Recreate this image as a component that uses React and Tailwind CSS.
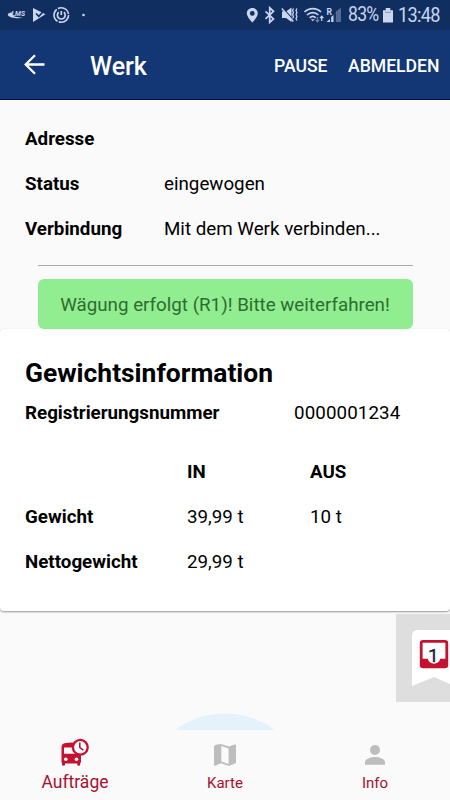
import React from "react";

function StatusBar() {
  return (
    <div className="flex h-[30px] shrink-0 items-center bg-[#102e60] text-[#c9d6ee]">
      <svg className="h-[30px] w-[100px] shrink-0" viewBox="0 0 100 30" fill="none">
        <path d="M13 12.300C9.500 12.500 7 14 8 15.200c1.500 2.400 9 4 17 2.400-5 .2-11-.8-12.500-2.400-.8-.7-.2-1.700 1-2.900z" fill="#c9d6ee" />
        <text x="11.500" y="15.800" fontSize="7" fontWeight="700" fontStyle="italic" textLength="13.500" lengthAdjust="spacingAndGlyphs" fill="#c9d6ee" fontFamily="Roboto, sans-serif">LMS</text>
        <path d="M33 8l12.500 6.300L33 22z" fill="#c9d6ee" />
        <path d="M36 13.500l2.800 2.800 5.700-6" stroke="#102e60" strokeWidth="1.600" />
        <circle cx="61.300" cy="15" r="7.300" stroke="#c9d6ee" strokeWidth="1.600" strokeDasharray="14 1.300" />
        <path d="M58.700 12.200a3.900 3.900 0 1 0 5.200 0M61.300 11v4" stroke="#c9d6ee" strokeWidth="1.700" />
        <circle cx="83.500" cy="15" r="1.300" fill="#c9d6ee" />
      </svg>
      <svg className="ml-[145px] h-[30px] w-[100px] shrink-0" viewBox="245 0 100 30" fill="none">
        <path fillRule="evenodd" d="M252.300 8c-3.200 0-5.500 2.400-5.500 5.300 0 3.900 5.500 9.200 5.500 9.200s5.500-5.300 5.500-9.200c0-2.900-2.300-5.300-5.500-5.300zm0 3a2.400 2.400 0 1 1 0 4.800 2.400 2.400 0 0 1 0-4.800z" fill="#c9d6ee" />
        <path d="M265.500 11.300l8 7.600-3.800 3.500V7.800l3.800 3.500-8 7.600" stroke="#c9d6ee" strokeWidth="1.700" />
        <path d="M282 11.500h4l5.500-4v14.500L286 18h-4z" fill="#c9d6ee" />
        <path d="M282.800 8l11 12.500" stroke="#102e60" strokeWidth="1.200" />
        <path d="M281.800 8.500l11.500 13" stroke="#c9d6ee" strokeWidth="1.500" />
        <path d="M293.500 8.500l-1 2 1 2-1 2 1 2-1 2M297 8.500l-1 2 1 2-1 2 1 2-1 2 1 2" stroke="#c9d6ee" strokeWidth="1.300" />
        <path d="M304.500 12c4.600-4.600 12-4.600 16.500 0M307 15c3.300-3.100 8.200-3.100 11.400 0M309.700 17.800c1.800-1.700 4.300-1.700 6 0" stroke="#c9d6ee" strokeWidth="1.700" />
        <path d="M310.800 19.200h4l-2 2.100z" fill="#c9d6ee" />
        <path d="M317.500 17v4.500M315.800 19.800l1.700 2 1.700-2" stroke="#6c82aa" strokeWidth="1.200" />
        <path d="M321.700 21v-4.500M320 18.200l1.700-2 1.700 2" stroke="#c9d6ee" strokeWidth="1.200" />
        <text x="326.500" y="14.600" fontSize="8.500" fontWeight="700" fill="#c9d6ee" fontFamily="Roboto, sans-serif">R</text>
        <path d="M326.500 22l3.500-3V22zM331.200 17l2.300-2V22h-2.300z" fill="#c9d6ee" />
        <path d="M335.800 11.500l5.200-3.800V22h-5.200z" fill="#536b99" />
      </svg>
      <span className="ml-[3px] w-[35px] shrink-0">
        <span className="inline-block origin-left scale-x-[0.88] whitespace-nowrap text-[20px] leading-none tracking-[-0.8px]">83%</span>
      </span>
      <svg className="h-[30px] w-[10px] shrink-0" viewBox="383 0 10 30">
        <path d="M383 10.200h2.700V8h4.600v2.200h2.700V22.500h-10z" fill="#c9d6ee" />
        <path d="M385 12.300h6" stroke="#8496b9" />
      </svg>
      <span className="ml-[5px] inline-block origin-left scale-x-[0.91] whitespace-nowrap text-[20px] leading-none tracking-[-0.8px]">13:48</span>
    </div>
  );
}

function Row({ label, value }) {
  return (
    <div className="grid h-[45px] grid-cols-[139px_1fr] items-center">
      <span className="font-bold">{label}</span>
      <span>{value}</span>
    </div>
  );
}

function WeightRow({ label, a, b, head }) {
  return (
    <div className={head ? "grid h-[45px] grid-cols-[162px_123px_1fr] items-center font-bold" : "grid h-[45px] grid-cols-[162px_123px_1fr] items-center"}>
      <span className="font-bold">{label}</span>
      <span>{a}</span>
      <span>{b}</span>
    </div>
  );
}

export default function App() {
  return (
    <div className="relative flex h-[800px] w-[450px] flex-col overflow-hidden bg-[#fafafa] font-['Roboto',sans-serif] text-[18.75px] leading-[22px] text-black">
      <StatusBar />
      <header className="flex h-[70px] shrink-0 items-center border-b border-[#02104c] bg-[#133774] text-white">
        <svg className="ml-[24px] h-[22px] w-[22px] shrink-0" viewBox="0 0 22 22" fill="none" stroke="white" strokeWidth="2.300">
          <path d="M20.500 10.500H2M11 1.200L1.700 10.500 11 19.800" />
        </svg>
        <h1 className="ml-[44px] w-[184px] shrink-0 pt-[4px] text-[25px] font-medium leading-none">Werk</h1>
        <span className="w-[74px] shrink-0 pt-[2px] text-[17.6px] font-medium">PAUSE</span>
        <span className="pt-[2px] text-[17.6px] font-medium">ABMELDEN</span>
      </header>

      <section className="h-[165px] shrink-0 pl-[25px] pt-[16px]">
        <Row label="Adresse" value="" />
        <Row label="Status" value="eingewogen" />
        <Row label="Verbindung" value="Mit dem Werk verbinden..." />
      </section>
      <div className="mx-[37.5px] h-px shrink-0 bg-[#aaaaaa]" />
      <div className="mx-[37.5px] mt-[13px] flex h-[50px] shrink-0 items-center justify-center rounded-[6px] bg-[#90ee90] pt-[2px] text-[#2f6b2f]">
        Wägung erfolgt (R1)! Bitte weiterfahren!
      </div>

      <section className="h-[282px] shrink-0 rounded-[4px] bg-white pl-[25px] pt-[29px] shadow-[0_1px_2px_rgba(0,0,0,0.4)]">
        <h2 className="h-[32px] text-[26.4px] font-bold leading-[30px]">Gewichtsinformation</h2>
        <div className="grid h-[45px] grid-cols-[269px_1fr] items-center">
          <span className="font-bold">Registrierungsnummer</span>
          <span className="tracking-[0.1px]">0000001234</span>
        </div>
        <div className="mt-[14px]">
          <WeightRow label="" a="IN" b="AUS" head />
          <WeightRow label="Gewicht" a="39,99 t" b="10 t" />
          <WeightRow label="Nettogewicht" a="29,99 t" b="" />
        </div>
      </section>

      <div className="mt-[3px] flex h-[88px] w-[54px] shrink-0 self-end bg-[#dedede]">
        <svg className="h-[88px] w-[54px]" viewBox="396 614 54 88">
          <path d="M412 636q0-6 6-6h32v54l-16-7-22 9z" fill="white" />
          <rect x="421.200" y="641.300" width="25.600" height="25.600" rx="1.800" fill="white" stroke="#c41230" strokeWidth="2.800" />
          <path d="M421 658.800h6.800c1.300 6.500 11 6.500 12.400 0h6.800v8.200H421z" fill="#c41230" />
          <text x="433.300" y="662" textAnchor="middle" fontSize="19" fill="#102040" stroke="#102040" strokeWidth="0.300" fontFamily="Roboto, sans-serif">1</text>
        </svg>
      </div>
      <svg className="mt-[11px] h-[17px] w-[100px] shrink-0 self-center" viewBox="0 0 100 17">
        <circle cx="50" cy="84.500" r="84" fill="#e3f2fb" />
      </svg>

      <nav className="grid h-[70px] shrink-0 grid-cols-3 text-[#a90f30]">
        <div className="flex flex-col items-center">
          <svg className="mt-[7px] h-[30px] w-[30px]" viewBox="60 737 30 30">
            <path fill="#c41230" d="M61.500 747q0-3.500 4-4 6-.8 11.500 0 4 .5 4 4v14.500q0 1.200-.8 1.700v1.300q0 1.200-1.500 1.200t-1.500-1.200V763.500H65v1q0 1.200-1.500 1.200T62 764.500v-1.300q-.5-.5-.5-1.700z" />
            <path fill="#fafafa" d="M64 747.500h9q.4 3.700 3.500 6.200H64z" />
            <circle cx="65.800" cy="759.300" r="1.800" fill="#fafafa" />
            <circle cx="76.500" cy="759.300" r="1.800" fill="#fafafa" />
            <circle cx="80.300" cy="747.300" r="7.400" fill="#fafafa" stroke="#c41230" strokeWidth="2.300" />
            <path d="M79.800 742.500v5l3.500 2.700" fill="none" stroke="#a91430" strokeWidth="1.500" />
          </svg>
          <span className="mt-[4px] text-[17.5px]">Aufträge</span>
        </div>
        <div className="flex flex-col items-center">
          <svg className="mt-[12px] h-[26px] w-[26px]" viewBox="0 0 26 26">
            <path fillRule="evenodd" fill="#bdbdbd" d="M4 2.800L9 2l8 2.500 5.500-2q1.500-.4 1.500 1V20q0 1-1 1.500L17 24l-8-2.800-6 2.500q-1 .3-1-1V4.500q0-1.200 2-1.700zM9.300 4v15.500l7.300 2.500V6.500z" />
          </svg>
          <span className="mt-[4px] text-[15px]">Karte</span>
        </div>
        <div className="flex flex-col items-center">
          <svg className="mt-[12px] h-[26px] w-[26px]" viewBox="0 0 26 26" fill="#bdbdbd">
            <circle cx="13" cy="8" r="5" />
            <path d="M3 22.800V20c0-3 6-5 10-5s10 2 10 5v2.800z" />
          </svg>
          <span className="mt-[4px] text-[15px]">Info</span>
        </div>
      </nav>
    </div>
  );
}
